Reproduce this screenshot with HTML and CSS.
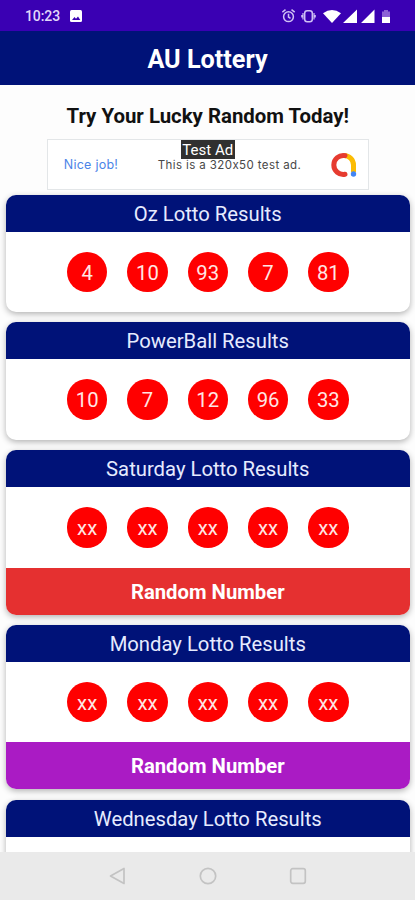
FILE: index.html
```html
<!DOCTYPE html>
<html lang="en">
<head>
<meta charset="utf-8">
<title>AU Lottery</title>
<link rel="stylesheet" href="styles.css">
</head>
<body>
<div class="screen">
  <div class="status">
    <span class="time">10:23</span>
    <svg class="photo" width="12" height="12" viewBox="0 0 12 12"><rect width="12" height="12" rx="1.5" fill="#fff"/><path d="M2 10 4.5 7 6 8.7 8 6.5 10.3 10z" fill="#3a00b3"/></svg>
    <svg class="signals" width="112" height="16" viewBox="0 0 112 16">
      <g fill="none" stroke="#cfc0f5" stroke-width="1.5">
        <circle cx="6.500" cy="8.7" r="4.9"/><path d="M6.500 5.8V9l2 1.3M.3 4.2 3.500 1.6M12.700 4.2 9.500 1.6"/>
        <rect x="22.700" y="2.8" width="7.6" height="11" rx="2.5"/><path d="M21 5v6.600M32 5v6.600M19.800 7v2.600M33.200 7v2.600" stroke-width="1.200"/>
      </g>
      <path d="M41 5.200Q50 -1 59 5.200L50 15z" fill="#fff"/>
      <path d="M75 1.500V15H61zM92.500 1.500V15H79z" fill="#fff"/>
      <path d="M100 3.500h2V2h4v1.500h2V9h-8z" fill="#8d62d6"/><path d="M100 9h8v6h-8z" fill="#fff"/>
    </svg>
  </div>
  <header class="appbar">AU Lottery</header>
  <main class="content">
    <h1 class="tagline">Try Your Lucky Random Today!</h1>
    <div class="ad">
      <span class="ad-left">Nice job!</span>
      <span class="ad-text">This is a 320x50 test ad.</span>
      <svg class="ad-logo" width="26" height="26" viewBox="0 0 26 26" fill="none" stroke-width="5"><path d="M13 3.500A9.500 9.500 0 0 1 22.500 13V20" stroke="#fbbc04"/><path d="M14 3.600A9.500 9.500 0 1 0 14 22.300" stroke="#e63b30" stroke-linecap="round"/><circle cx="22.500" cy="22" r="2.700" fill="#4285f4"/></svg>
      <span class="ad-tag">Test Ad</span>
    </div>
    <section class="card"><h2>Oz Lotto Results</h2><div class="balls"><b>4</b><b>10</b><b>93</b><b>7</b><b>81</b></div></section>
    <section class="card"><h2>PowerBall Results</h2><div class="balls"><b>10</b><b>7</b><b>12</b><b>96</b><b>33</b></div></section>
    <section class="card"><h2>Saturday Lotto Results</h2><div class="balls"><b>xx</b><b>xx</b><b>xx</b><b>xx</b><b>xx</b></div><div class="button red">Random Number</div></section>
    <section class="card"><h2>Monday Lotto Results</h2><div class="balls"><b>xx</b><b>xx</b><b>xx</b><b>xx</b><b>xx</b></div><div class="button purple">Random Number</div></section>
    <section class="card"><h2>Wednesday Lotto Results</h2><div class="balls"></div></section>
  </main>
  <nav class="nav">
    <svg width="18" height="18" viewBox="0 0 18 18"><path d="M16 1.500v15L2.500 9z"/></svg>
    <svg width="18" height="18" viewBox="0 0 18 18"><circle cx="9" cy="9" r="7.700"/></svg>
    <svg width="18" height="18" viewBox="0 0 18 18"><rect x="1.700" y="1.700" width="14.600" height="14.600" rx="2"/></svg>
  </nav>
</div>
</body>
</html>
```
FILE: styles.css
```css
* { box-sizing: border-box; }
body { margin: 0; font-family: Roboto, "Liberation Sans", sans-serif; background: #fff; }
.screen { width: 415px; height: 900px; display: flex; flex-direction: column; overflow: hidden; }
.status { flex: 0 0 31px; background: #3a00b3; display: flex; align-items: center; padding: 1px 21px 0 25px; }
.time { font-size: 14px; font-weight: 500; color: #e2d8fa; letter-spacing: -.1px; }
.photo { margin-left: 10px; }
.signals { margin-left: auto; }
.appbar { flex: 0 0 53.5px; background: #001278; color: #fff; font-size: 25.200px; font-weight: 700; display: flex; align-items: center; justify-content: center; padding-top: 3px; }
.content { flex: 1; min-height: 0; overflow: hidden; padding: 0 5px 0 5.500px; background: #fdfdfd; }
.tagline { margin: 0; height: 54.500px; padding-top: 17px; text-align: center; font-size: 20.400px; line-height: 28px; font-weight: 700; color: #111; white-space: nowrap; }
.ad { position: relative; width: 322px; height: 51px; margin: 0 auto 4.500px; border: 1px solid #e3e6e8; background: #fff; display: flex; align-items: center; padding: 0 11px 0 16px; white-space: nowrap; font-family: Inter, sans-serif; font-feature-settings: "calt" 0; }
.ad-left { font-size: 12.500px; letter-spacing: .25px; color: #4c84e8; width: 94px; }
.ad-text { font-size: 11.500px; letter-spacing: .4px; color: #484848; }
.ad-logo { margin-left: auto; }
.ad-tag { position: absolute; left: 133px; top: 0; width: 54px; height: 19px; background: #303030; color: #fff; font-family: Roboto, sans-serif; font-size: 15px; line-height: 20px; text-align: center; }
.card { overflow: hidden; border-radius: 10px; background: #fff; margin-bottom: 10.300px; box-shadow: 0 2px 6px rgba(0, 0, 0, .3); }
.card h2 { margin: 0; height: 37px; background: #001278; color: #e6ebff; font-size: 20.250px; line-height: 38px; font-weight: 400; text-align: center; }
.balls { height: 80.500px; display: flex; align-items: center; justify-content: center; gap: 19.800px; }
.balls b { width: 40.500px; height: 40.500px; border-radius: 50%; background: #f00; color: #ffe6e4; font-size: 20.250px; font-weight: 400; line-height: 42px; text-align: center; }
.button { height: 47px; color: #fff; font-size: 20.300px; font-weight: 700; line-height: 48px; text-align: center; }
.red { background: #e53030; }
.purple { background: #aa1bc4; }
.nav { flex: 0 0 48px; background: #eaeaea; display: flex; align-items: center; justify-content: center; gap: 72.500px; }
.nav svg { fill: none; stroke: #c3c3c3; stroke-width: 1.700; stroke-linejoin: round; }
```
